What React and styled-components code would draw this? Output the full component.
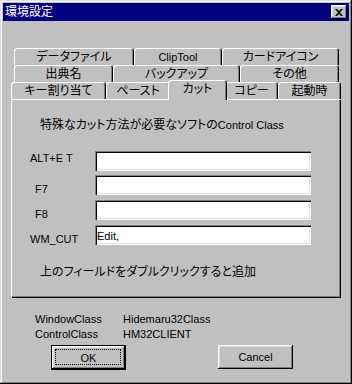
import React from "react";
import styled, { createGlobalStyle } from "styled-components";

const GlobalStyle = createGlobalStyle`
  html, body {
    margin: 0;
    padding: 0;
    background: #c0c0c0;
  }
  body {
    font-family: "Liberation Sans", "Noto Sans CJK JP", sans-serif;
    font-size: 12px;
    color: #000;
    font-feature-settings: "palt";
  }
`;

const Window = styled.div`
  width: 352px;
  height: 384px;
  box-sizing: border-box;
  padding: 3px;
  background: #c0c0c0;
  box-shadow: inset -1px -1px #000, inset 1px 1px #dfdfdf,
    inset -2px -2px #808080, inset 2px 2px #fff;
  display: flex;
  flex-direction: column;
`;

const TitleBar = styled.div`
  height: 18px;
  background: #000080;
  display: flex;
  align-items: center;
  justify-content: space-between;
  padding: 0 2px;
`;

const Title = styled.span`
  color: #fff;
  font-size: 12px;
  line-height: 14px;
`;

const CloseButton = styled.button`
  width: 16px;
  height: 14px;
  padding: 0;
  border: none;
  background: #c0c0c0;
  box-shadow: inset -1px -1px #000, inset 1px 1px #fff,
    inset -2px -2px #808080, inset 2px 2px #dfdfdf;
  display: flex;
  align-items: center;
  justify-content: center;
`;

const Body = styled.div`
  flex: 1;
  padding: 27px 8px 0 8px;
  display: flex;
  flex-direction: column;
`;

const TabStrip = styled.div`
  display: flex;
  flex-direction: column;
`;

const TabRow = styled.div`
  display: flex;
  height: 17px;
  padding-left: ${(p) => p.$inset || 0}px;
  padding-right: ${(p) => p.$insetRight || 0}px;
`;

const Tab = styled.div`
  box-sizing: border-box;
  flex: none;
  width: ${(p) => (p.$selected ? p.$w + 4 : p.$w)}px;
  height: ${(p) => (p.$selected ? 20 : 17)}px;
  margin: ${(p) => (p.$selected ? "-2px -2px -1px" : "0")};
  position: relative;
  z-index: ${(p) => (p.$selected ? 1 : 0)};
  background: #c0c0c0;
  border-radius: 3px 3px 0 0;
  box-shadow: inset 1px 1px #fff, inset -1px 0 #000, inset -2px 0 #808080;
  display: flex;
  align-items: center;
  justify-content: center;
  padding-bottom: ${(p) => (p.$selected ? 3 : 0)}px;
  line-height: 14px;
  white-space: nowrap;
`;

const Latin = styled.span`
  font-size: 11px;
`;

const Panel = styled.div`
  height: 199px;
  box-sizing: border-box;
  background: #c0c0c0;
  box-shadow: inset 1px 1px #fff, inset -1px -1px #000, inset -2px -2px #808080;
  padding: 19px 0 0 19px;
  display: flex;
  flex-direction: column;
`;

const Note = styled.div`
  margin-left: 10px;
  margin-top: ${(p) => p.$top || 0}px;
  line-height: 14px;
  white-space: nowrap;
`;

const FieldGrid = styled.div`
  display: grid;
  grid-template-columns: 65px 216px;
  row-gap: 4px;
  margin-top: 19px;
`;

const FieldLabel = styled.label`
  padding-left: ${(p) => p.$indent || 0}px;
  padding-top: ${(p) => p.$drop || 0}px;
  line-height: 14px;
  font-size: 11px;
  white-space: nowrap;
`;

const Field = styled.input`
  box-sizing: border-box;
  width: 216px;
  height: 20px;
  margin: 0;
  border: none;
  outline: none;
  background: #fff;
  padding: 2px 2px 0;
  font-family: "Liberation Sans", "Noto Sans CJK JP", sans-serif;
  font-size: 11px;
  color: #000;
  box-shadow: inset 1px 1px #808080, inset 2px 2px #000,
    inset -1px -1px #fff, inset -2px -2px #dfdfdf;
`;

const InfoGrid = styled.div`
  display: grid;
  grid-template-columns: 88px auto;
  margin-top: 14px;
  padding-left: 24px;
  font-size: 11px;
  line-height: 15px;
`;

const ButtonRow = styled.div`
  display: flex;
  gap: 92px;
  margin-top: 3px;
  padding-left: 40px;
`;

const Button = styled.button`
  position: relative;
  box-sizing: border-box;
  width: 75px;
  height: ${(p) => (p.$default ? 25 : 24)}px;
  padding: 0;
  background: #c0c0c0;
  border: ${(p) => (p.$default ? "1px solid #000" : "none")};
  font-family: "Liberation Sans", "Noto Sans CJK JP", sans-serif;
  font-size: 11px;
  color: #000;
  box-shadow: inset -1px -1px #000, inset 1px 1px #fff,
    inset -2px -2px #808080, inset 2px 2px #dfdfdf;

  &::after {
    content: "";
    display: ${(p) => (p.$default ? "block" : "none")};
    position: absolute;
    inset: 3px 4px 4px 3px;
    border: 1px dotted #000;
  }
`;

const tabRows = [
  {
    inset: 3,
    right: 2,
    tabs: [
      ["データファイル", 120],
      [<Latin key="c">ClipTool</Latin>, 88, false, "ClipTool"],
      ["カードアイコン", 117],
    ],
  },
  {
    inset: 3,
    right: 2,
    tabs: [
      ["出典名", 99],
      ["バックアップ", 127],
      ["その他", 99],
    ],
  },
  {
    inset: 0,
    right: 0,
    tabs: [
      ["キー割り当て", 95],
      ["ペースト", 64],
      ["カット", 55, true],
      ["コピー", 53],
      ["起動時", 63],
    ],
  },
];

const fields = [
  { label: "ALT+E T", indent: 0, drop: 0, value: "" },
  { label: "F7", indent: 5, drop: 7, value: "" },
  { label: "F8", indent: 5, drop: 7, value: "" },
  { label: "WM_CUT", indent: 0, drop: 7, value: "Edit," },
];

export default function App() {
  return (
    <>
      <GlobalStyle />
      <Window>
        <TitleBar>
          <Title>環境設定</Title>
          <CloseButton aria-label="close">
            <svg width="8" height="7" viewBox="0 0 8 7">
              <path
                d="M0 0h2l2 2 2-2h2L5 3.5 8 7H6L4 5 2 7H0l3-3.5z"
                fill="#000"
              />
            </svg>
          </CloseButton>
        </TitleBar>
        <Body>
          <TabStrip>
            {tabRows.map((row, i) => (
              <TabRow key={i} $inset={row.inset} $insetRight={row.right}>
                {row.tabs.map(([name, w, sel, key]) => (
                  <Tab key={key || name} $w={w} $selected={sel}>
                    {name}
                  </Tab>
                ))}
              </TabRow>
            ))}
          </TabStrip>
          <Panel>
            <Note>
              特殊なカット方法が必要なソフトの<Latin>Control Class</Latin>
            </Note>
            <FieldGrid>
              {fields.map((f) => (
                <React.Fragment key={f.label}>
                  <FieldLabel $indent={f.indent} $drop={f.drop}>
                    {f.label}
                  </FieldLabel>
                  <Field readOnly value={f.value} />
                </React.Fragment>
              ))}
            </FieldGrid>
            <Note $top={19}>上のフィールドをダブルクリックすると追加</Note>
          </Panel>
          <InfoGrid>
            <span>WindowClass</span>
            <span>Hidemaru32Class</span>
            <span>ControlClass</span>
            <span>HM32CLIENT</span>
          </InfoGrid>
          <ButtonRow>
            <Button $default>OK</Button>
            <Button>Cancel</Button>
          </ButtonRow>
        </Body>
      </Window>
    </>
  );
}
